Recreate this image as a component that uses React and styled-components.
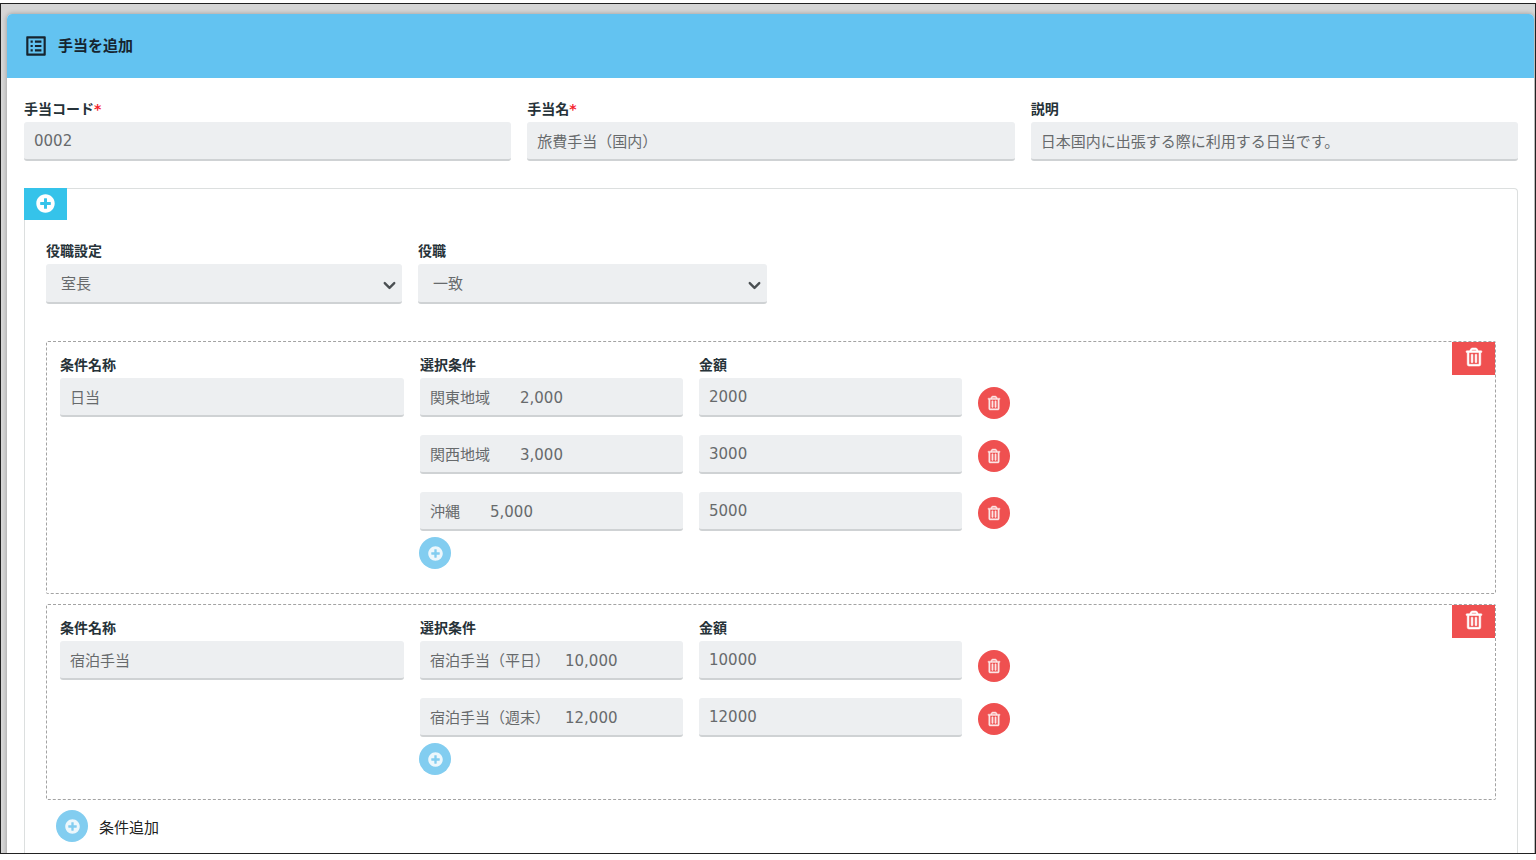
import React from 'react';
import styled, { createGlobalStyle, css } from 'styled-components';
import { MdListAlt } from 'react-icons/md';
import { FaPlusCircle, FaRegTrashAlt } from 'react-icons/fa';
import { LuChevronDown } from 'react-icons/lu';

const GlobalStyle = createGlobalStyle`
  *, *::before, *::after {
    box-sizing: border-box;
  }

  body {
    margin: 0;
    background: #fff;
    color: #263238;
    font-family: 'DejaVu Sans', 'Noto Sans CJK JP', sans-serif;
    font-size: 15px;
    text-spacing-trim: space-all;
  }
`;

const StyledPage = styled.div`
  height: 100vh;
  padding: 3px 0 6px;
  overflow: hidden;
`;

const StyledFrame = styled.main`
  height: 100%;
  padding: 10px 1px 0 6px;
  overflow: hidden;
  background: #d6d6d6;
  border: 1px solid #222;
`;

const StyledCard = styled.section`
  min-height: 100%;
  background: #fff;
  border-radius: 5px 5px 0 0;
  box-shadow: 0 0 5px rgba(0, 0, 0, 0.3);
`;

const StyledHeader = styled.header`
  display: flex;
  align-items: center;
  gap: 9px;
  height: 64px;
  padding: 0 16px;
  color: #16242f;
  background: #63c3f1;
  border-radius: 5px 5px 0 0;
`;

const StyledTitle = styled.h1`
  margin: 0;
  font-size: 15px;
  font-weight: 700;
  line-height: 22px;
`;

const StyledForm = styled.form`
  padding: 22px 16px 0 17px;
`;

const StyledFields = styled.div`
  display: grid;
  grid-template-columns: ${({ $columns }) => $columns};
  gap: 16px;
`;

const StyledField = styled.div`
  display: flex;
  flex-direction: column;
  gap: 4px;
  min-width: 0;
`;

const StyledLabel = styled.label`
  font-size: 14px;
  font-weight: 700;
  line-height: 18px;
`;

const StyledRequired = styled.span`
  color: #f5222d;
`;

const controlStyles = css`
  width: 100%;
  height: 39px;
  margin: 0;
  color: #676a6c;
  font-family: inherit;
  font-size: 15px;
  text-spacing-trim: inherit;
  background: #edeff1;
  border: 0;
  border-bottom: 2px solid #cfd2d4;
  border-radius: 3px;
  outline: 0;
`;

const StyledInput = styled.input`
  ${controlStyles}
  padding: 0 10px;
`;

const StyledSelectBox = styled.div`
  position: relative;

  svg {
    position: absolute;
    top: 12px;
    right: 3px;
    color: #4a4f52;
    pointer-events: none;
  }
`;

const StyledSelect = styled.select`
  ${controlStyles}
  height: 40px;
  padding: 2px 32px 0 15px;
  appearance: none;
`;

const StyledPanel = styled.section`
  margin-top: 27px;
  padding-bottom: 24px;
  border: 1px solid #dcdfdf;
  border-bottom: 0;
  border-radius: 4px 4px 0 0;
`;

const StyledPanelBody = styled.div`
  padding: 22px 21px 0;
`;

const StyledTab = styled.button`
  display: flex;
  justify-content: center;
  width: 43px;
  height: 32px;
  margin: -1px 0 0 -1px;
  padding: 6px 0 0;
  color: #fff;
  background: #35c3ea;
  border: 0;
`;

const StyledTrashIcon = styled(FaRegTrashAlt)`
  overflow: visible;
  stroke: currentColor;
  stroke-width: 16px;
`;

const StyledCornerButton = styled.button`
  position: absolute;
  top: 0;
  right: 0;
  display: flex;
  justify-content: center;
  width: 43px;
  height: 33px;
  padding: 6px 0 0;
  color: #fff;
  background: #ef5050;
  border: 0;
`;

const StyledRoundButton = styled.button`
  display: flex;
  align-items: center;
  justify-content: center;
  width: 32px;
  height: 32px;
  padding: 0;
  color: #fff;
  background: ${({ $danger }) => ($danger ? '#ef5050' : '#82cdf0')};
  border: 0;
  border-radius: 50%;

  svg {
    opacity: 0.85;
  }
`;

const StyledConditions = styled.div`
  display: grid;
  gap: 10px;
  margin-top: 37px;
`;

const StyledCondition = styled.article`
  position: relative;
  padding: 14px 13px 24px;
  border: 1px dashed #a3a3a3;
  border-radius: 2px;
`;

const StyledLines = styled.div`
  display: grid;
  gap: 18px;
`;

const StyledLine = styled.div`
  display: grid;
  grid-template-columns: 263fr 263fr 504fr;
  align-items: end;
  gap: 16px;

  ${StyledRoundButton} {
    margin-bottom: ${({ $first }) => ($first ? '-2px' : '2px')};
  }
`;

const StyledAddLine = styled.div`
  margin: 6px 0 0 -1px;
`;

const StyledAddCondition = styled.div`
  display: flex;
  align-items: center;
  gap: 11px;
  padding: 10px 10px 0;
  color: #222;
`;

const baseFields = [
  { id: 'code', label: '手当コード', value: '0002', required: true },
  { id: 'name', label: '手当名', value: '旅費手当（国内）', required: true },
  { id: 'description', label: '説明', value: '日本国内に出張する際に利用する日当です。' },
];

const conditions = [
  {
    id: 'daily',
    name: '日当',
    lines: [
      { option: '関東地域　　2,000', amount: '2000' },
      { option: '関西地域　　3,000', amount: '3000' },
      { option: '沖縄　　5,000', amount: '5000' },
    ],
  },
  {
    id: 'lodging',
    name: '宿泊手当',
    lines: [
      { option: '宿泊手当（平日）　10,000', amount: '10000' },
      { option: '宿泊手当（週末）　12,000', amount: '12000' },
    ],
  },
];

const TextField = ({ id, label, value, required, hint }) => (
  <StyledField>
    {label && (
      <StyledLabel htmlFor={id}>
        {label}
        {required && <StyledRequired>*</StyledRequired>}
      </StyledLabel>
    )}
    <StyledInput id={id} aria-label={hint} defaultValue={value} required={required} readOnly />
  </StyledField>
);

const SelectField = ({ id, label, value }) => (
  <StyledField>
    <StyledLabel htmlFor={id}>{label}</StyledLabel>
    <StyledSelectBox>
      <StyledSelect id={id} defaultValue={value}>
        <option value={value}>{value}</option>
      </StyledSelect>
      <LuChevronDown size={19} strokeWidth={3} />
    </StyledSelectBox>
  </StyledField>
);

const Condition = ({ id, name, lines }) => (
  <StyledCondition>
    <StyledFields $columns="344fr 1062fr">
      <TextField id={`${id}-name`} label="条件名称" value={name} />
      <div>
        <StyledLines>
          {lines.map(({ option, amount }, index) => (
            <StyledLine key={amount} $first={index === 0}>
              <TextField
                id={`${id}-option-${index}`}
                label={index === 0 ? '選択条件' : null}
                hint={index === 0 ? undefined : '選択条件'}
                value={option}
              />
              <TextField
                id={`${id}-amount-${index}`}
                label={index === 0 ? '金額' : null}
                hint={index === 0 ? undefined : '金額'}
                value={amount}
              />
              <StyledRoundButton type="button" aria-label="削除" $danger>
                <StyledTrashIcon size={14} />
              </StyledRoundButton>
            </StyledLine>
          ))}
        </StyledLines>
        <StyledAddLine>
          <StyledRoundButton type="button" aria-label="追加">
            <FaPlusCircle size={15} />
          </StyledRoundButton>
        </StyledAddLine>
      </div>
    </StyledFields>
    <StyledCornerButton type="button" aria-label="条件を削除">
      <StyledTrashIcon size={18} />
    </StyledCornerButton>
  </StyledCondition>
);

const App = () => (
  <StyledPage>
    <GlobalStyle />
    <StyledFrame>
      <StyledCard>
        <StyledHeader>
          <MdListAlt size={26} />
          <StyledTitle>手当を追加</StyledTitle>
        </StyledHeader>
        <StyledForm>
          <StyledFields $columns="repeat(3, 1fr)">
            {baseFields.map((field) => (
              <TextField key={field.id} {...field} />
            ))}
          </StyledFields>
          <StyledPanel>
            <StyledTab type="button" aria-label="役職を追加">
              <FaPlusCircle size={19} />
            </StyledTab>
            <StyledPanelBody>
              <StyledFields $columns="356fr 349fr 713fr">
                <SelectField id="position-setting" label="役職設定" value="室長" />
                <SelectField id="position" label="役職" value="一致" />
              </StyledFields>
              <StyledConditions>
                {conditions.map((condition) => (
                  <Condition key={condition.id} {...condition} />
                ))}
              </StyledConditions>
              <StyledAddCondition>
                <StyledRoundButton type="button" id="add-condition">
                  <FaPlusCircle size={15} />
                </StyledRoundButton>
                <label htmlFor="add-condition">条件追加</label>
              </StyledAddCondition>
            </StyledPanelBody>
          </StyledPanel>
        </StyledForm>
      </StyledCard>
    </StyledFrame>
  </StyledPage>
);

export default App;
